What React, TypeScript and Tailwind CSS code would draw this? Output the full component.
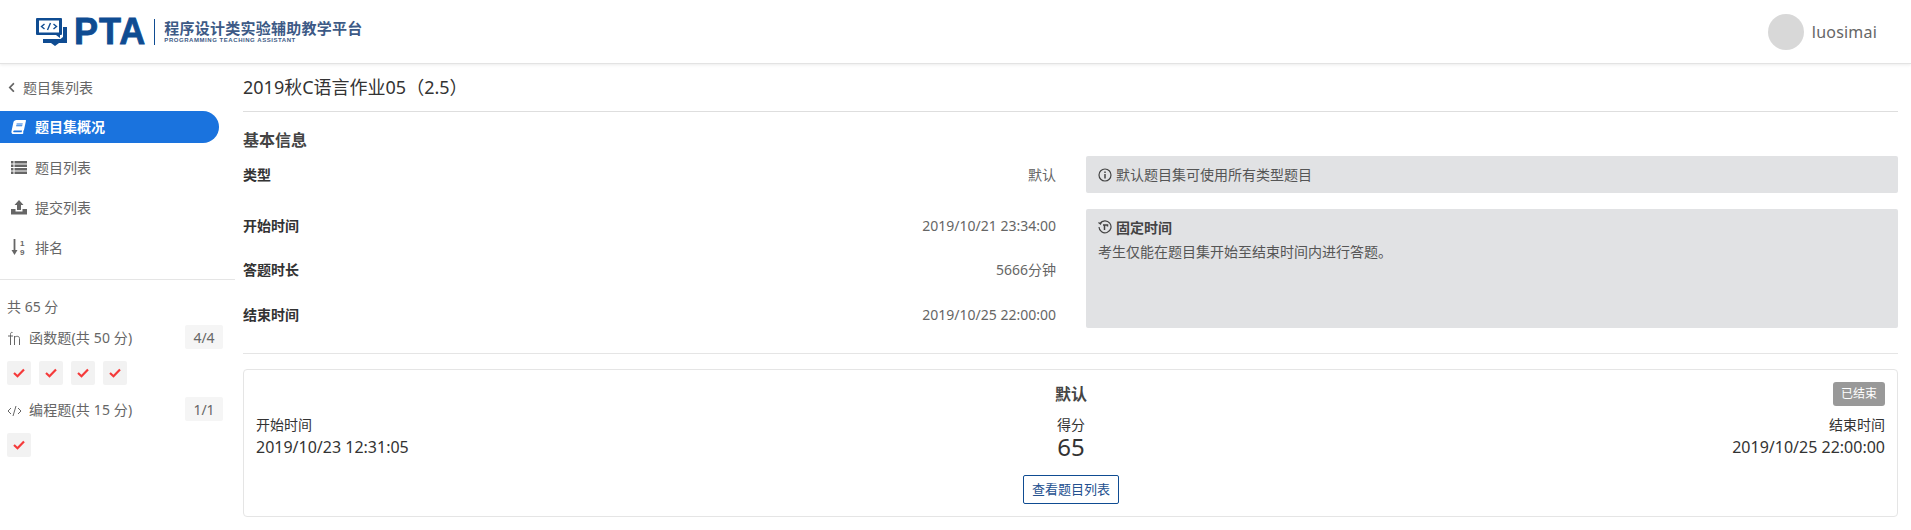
import React from "react";
import { FaBook, FaChevronLeft } from "react-icons/fa";

const FONT = "[font-family:'Noto_Sans','Noto_Sans_CJK_SC',sans-serif]";

function Logo() {
  return (
    <div className="flex items-center">
      <svg width="31" height="28" viewBox="0 0 31 28" className="mr-[7px] mt-[1px]">
        <path d="M1 0h24a1 1 0 0 1 1 1v15a1 1 0 0 1-1 1h-1v3l-4-3H1a1 1 0 0 1-1-1V1a1 1 0 0 1 1-1z" fill="#0f4c92" />
        <rect x="3" y="2.500" width="20" height="12" fill="#fff" />
        <path d="M8.500 6L5.500 8.500l3 2.500M17.500 6l3 2.500-3 2.500M14.500 5l-3 7" stroke="#0f4c92" strokeWidth="1.400" fill="none" />
        <path d="M27 9h4v16H23l-4 3-4-3H7v-4h17.500L27 19z" fill="#0f4c92" />
      </svg>
      <span className="font-['Liberation_Sans'] font-bold text-[36px] leading-none text-[#0f4c92] tracking-[1px] [-webkit-text-stroke:0.8px_#0f4c92]">
        PTA
      </span>
      <div className="w-px h-[26px] bg-[#0f4c92] ml-2 mr-[9px]" />
      <div className="flex flex-col">
        <span className="text-[15px] leading-[18px] font-bold text-[#3d5a86] tracking-[0.25px]">程序设计类实验辅助教学平台</span>
        <span className="font-['Liberation_Sans'] text-[6px] leading-[7px] font-bold text-[#3d5a86] tracking-[0.55px]">PROGRAMMING TEACHING ASSISTANT</span>
      </div>
    </div>
  );
}

function ListIcon() {
  return (
    <svg width="16" height="13" viewBox="0 0 16 13" fill="#666">
      <rect x="0" y="0" width="2.500" height="2.500" />
      <rect x="3.500" y="0" width="12.500" height="2.500" />
      <rect x="0" y="3.500" width="2.500" height="2.500" />
      <rect x="3.500" y="3.500" width="12.500" height="2.500" />
      <rect x="0" y="7" width="2.500" height="2.500" />
      <rect x="3.500" y="7" width="12.500" height="2.500" />
      <rect x="0" y="10.500" width="2.500" height="2.500" />
      <rect x="3.500" y="10.500" width="12.500" height="2.500" />
    </svg>
  );
}

function UploadIcon() {
  return (
    <svg width="16" height="15" viewBox="0 0 16 15">
      <path d="M8 0l4.500 5H10v5H6V5H3.500z" fill="#666" />
      <path d="M0 9h4.500v2.500h7V9H16v5.500H0z" fill="#666" />
    </svg>
  );
}

function SortIcon() {
  return (
    <svg width="16" height="17" viewBox="0 0 16 17">
      <path d="M3.500 0v13" stroke="#666" strokeWidth="1.800" />
      <path d="M0.500 11h6l-3 5z" fill="#666" />
      <text x="9" y="7" fontSize="8" fontWeight="700" fill="#666" fontFamily="Liberation Sans">1</text>
      <text x="9" y="16" fontSize="8" fontWeight="700" fill="#666" fontFamily="Liberation Sans">9</text>
    </svg>
  );
}

function Check() {
  return (
    <div className="w-6 h-6 rounded-[2px] bg-[#f2f2f2] flex items-center justify-center">
      <svg width="12" height="10" viewBox="0 0 12 10" fill="none" stroke="#f53a3a" strokeWidth="2.200">
        <path d="M1 5l3.500 3.200L11 1.500" />
      </svg>
    </div>
  );
}

function NavRow({ icon, label }: { icon: React.ReactNode; label: string }) {
  return (
    <div className="h-10 flex items-center text-[14px] text-[#666]">
      <div className="w-[35px] pl-[11px] flex items-center">{icon}</div>
      <span>{label}</span>
    </div>
  );
}

function GroupRow({ icon, label, count }: { icon: React.ReactNode; label: string; count: string }) {
  return (
    <div className="h-6 flex items-center justify-between text-[14px] text-[#666] pl-[7px] pr-3">
      <div className="flex items-center">
        <div className="w-[22px] flex items-center">{icon}</div>
        <span className="tracking-[0.15px]">{label}</span>
      </div>
      <span className="w-[38px] h-6 rounded-[2px] bg-[#f5f5f5] flex items-center justify-center">{count}</span>
    </div>
  );
}

function InfoRow({ label, value, className }: { label: string; value: string; className: string }) {
  return (
    <div className={`flex items-center justify-between ${className}`}>
      <span className="text-[14px] font-bold text-[#333]">{label}</span>
      <span className="text-[14px] text-[#666]">{value}</span>
    </div>
  );
}

export default function App() {
  return (
    <div className={`${FONT} w-[1911px] h-[530px] bg-white overflow-hidden flex flex-col text-[#333]`}>
      <header className="h-16 shrink-0 bg-white border-b border-[#e3e3e3] shadow-[0_1px_3px_rgba(0,0,0,0.08)] flex items-center justify-between pl-9 pr-[29px]">
        <Logo />
        <div className="flex items-center">
          <div className="w-9 h-9 rounded-full bg-[#d8d8d8] mr-2" />
          <span className="text-[16px] text-[#666] tracking-[0.2px] mr-[5px]">luosimai</span>
        </div>
      </header>

      <div className="flex flex-1 min-h-0">
        <aside className="w-[235px] shrink-0">
          <div className="h-[47px] pb-[1px] flex items-center text-[14px] text-[#666]">
            <FaChevronLeft className="w-[9px] h-[11px] ml-[7px] mr-[7px]" />
            <span>题目集列表</span>
          </div>
          <div className="w-[219px] h-8 pb-[1px] rounded-r-full bg-[#1a73de] flex items-center text-white text-[14px] font-bold">
            <div className="w-[35px] pl-[11px] flex items-center">
              <FaBook className="w-[15px] h-[14px] -skew-x-12" />
            </div>
            <span>题目集概况</span>
          </div>
          <div className="pt-[4px]">
            <NavRow icon={<ListIcon />} label="题目列表" />
            <NavRow icon={<UploadIcon />} label="提交列表" />
            <NavRow icon={<SortIcon />} label="排名" />
          </div>
          <div className="h-px bg-[#e5e5e5] mt-[12px]" />
          <div className="pl-[7px] mt-[17px] h-[19px] flex items-center text-[14px] text-[#666]">共 65 分</div>
          <div className="mt-[9px]">
            <GroupRow
              icon={
                <svg width="15" height="15" viewBox="0 0 15 15" fill="none" stroke="#666" strokeWidth="1" className="mt-[3px]">
                  <path d="M5.500 1.500C4 1 3.500 2 3.500 3.500V14M1 5h5M7.500 14V5M7.500 6.500c1-1.500 5-2 5 1V14" />
                </svg>
              }
              label="函数题(共 50 分)"
              count="4/4"
            />
          </div>
          <div className="flex gap-2 pl-[7px] mt-3">
            <Check /><Check /><Check /><Check />
          </div>
          <div className="mt-3">
            <GroupRow
              icon={
                <svg width="15" height="12" viewBox="0 0 15 12" fill="none" stroke="#666" strokeWidth="1" className="mt-[3px]">
                  <path d="M4 3L1 6l3 3M11 3l3 3-3 3M9 1L6 11" />
                </svg>
              }
              label="编程题(共 15 分)"
              count="1/1"
            />
          </div>
          <div className="flex gap-2 pl-[7px] mt-3">
            <Check />
          </div>
        </aside>

        <main className="w-[1655px] ml-2">
          <div className="h-[48px] border-b border-[#dedede] flex items-center text-[18px] text-[#333]">2019秋C语言作业05（2.5）</div>
          <h2 className="mt-[16px] h-6 flex items-center text-[16px] font-bold text-[#444]">基本信息</h2>
          <div className="flex mt-[4px] pb-[25px] border-b border-[#e5e5e5]">
            <div className="w-[813px] h-[172px]">
              <InfoRow label="类型" value="默认" className="h-[37px]" />
              <InfoRow label="开始时间" value="2019/10/21 23:34:00" className="mt-[16px] h-[32px]" />
              <InfoRow label="答题时长" value="5666分钟" className="mt-[8px] h-[40px]" />
              <InfoRow label="结束时间" value="2019/10/25 22:00:00" className="mt-[11px] h-[28px]" />
            </div>
            <div className="ml-[30px] flex-1">
              <div className="h-[37px] rounded-[2px] bg-[#e1e2e4] flex items-center pl-3 text-[14px] text-[#555]">
                <svg width="14" height="14" viewBox="0 0 14 14" fill="none" stroke="#444" className="mr-[4px]">
                  <circle cx="7" cy="7" r="6" strokeWidth="1.200" />
                  <path d="M7 6v4.500M7 3.500v1.500" strokeWidth="1.500" />
                </svg>
                默认题目集可使用所有类型题目
              </div>
              <div className="h-[119px] mt-4 rounded-[2px] bg-[#e1e2e4] pl-3 pt-[8px] text-[14px] text-[#555]">
                <div className="flex items-center h-[20px] font-bold text-[#444]">
                  <svg width="14" height="14" viewBox="0 0 14 14" fill="none" stroke="#444" strokeWidth="1.200" className="mr-[4px]">
                    <path d="M2 3.500A6 6 0 1 1 1 7" />
                    <path d="M0.500 2.500l2 1.500 1-2" />
                    <path d="M5 5h4.500v1.500M6.500 5v5" strokeWidth="1.500" />
                  </svg>
                  固定时间
                </div>
                <div className="mt-[5px] leading-[20px]">考生仅能在题目集开始至结束时间内进行答题。</div>
              </div>
            </div>
          </div>

          <section className="mt-[15px] h-[148px] rounded-[4px] border border-[#e5e5e5] px-3 pt-3 relative flex justify-between text-[#333]">
            <div className="pt-[33px]">
              <div className="text-[14px] leading-[20px]">开始时间</div>
              <div className="text-[16px] leading-[24px]">2019/10/23 12:31:05</div>
            </div>
            <div className="flex flex-col items-center absolute left-[639px] w-[376px] top-[12px]">
              <div className="h-6 flex items-center text-[16px] font-bold text-[#444]">默认</div>
              <div className="text-[14px] leading-[19px] mt-[9px]">得分</div>
              <div className="text-[24px] leading-[26px]">65</div>
              <button className="mt-[15px] w-[96px] h-[29px] rounded-[2px] border border-[#0f4c92] text-[13px] text-[#23508f] flex items-center justify-center">查看题目列表</button>
            </div>
            <div className="flex flex-col items-end">
              <span className="w-[52px] h-6 rounded-[3px] bg-[#999] text-white text-[12px] flex items-center justify-center">已结束</span>
              <div className="text-[14px] leading-[20px] mt-[9px]">结束时间</div>
              <div className="text-[16px] leading-[24px]">2019/10/25 22:00:00</div>
            </div>
          </section>
        </main>
      </div>
    </div>
  );
}
